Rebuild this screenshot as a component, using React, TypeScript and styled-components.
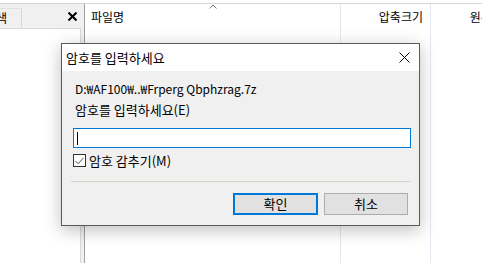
import React from "react";
import styled, { createGlobalStyle } from "styled-components";

const GlobalStyle = createGlobalStyle`
  html, body {
    margin: 0;
    padding: 0;
    background: #fff;
  }
  body {
    font-family: "Noto Sans CJK KR", "Noto Sans", sans-serif;
    font-size: 12px;
    color: #000;
  }
`;

const Screen = styled.div`
  position: relative;
  width: 482px;
  height: 263px;
  overflow: hidden;
  padding-top: 3px;
  box-sizing: border-box;
`;

const Frame = styled.div`
  display: flex;
  height: 100%;
  border-top: 1px solid #d7d7d7;
`;

/* left side pane */
const SidePane = styled.div`
  width: 84px;
  flex: none;
  display: flex;
  flex-direction: column;
  background: #f0f0f0;
  border-right: 1px solid #a0a0a0;
`;

const SideTabs = styled.div`
  height: 24px;
  display: flex;
  align-items: flex-end;
`;

const Tab = styled.div`
  width: 21px;
  height: 19px;
  overflow: hidden;
  border-right: 1px solid #d9d9d9;
  border-top: 1px solid #e2e2e2;
  line-height: 18px;
  white-space: nowrap;
  span {
    margin-left: -4px;
  }
`;

const PaneClose = styled.div`
  margin-left: auto;
  margin-right: 7px;
  align-self: center;
  display: flex;
`;

const SideList = styled.div`
  flex: 1;
  width: 80px;
  background: #fff;
  border-top: 1px solid #dadada;
  border-right: 1px solid #d9d9d9;
`;

/* right file list */
const ListPane = styled.div`
  flex: 1;
  display: flex;
  background: #fff;
`;

const Column = styled.div<{ $w: number; $align?: "left" | "right" }>`
  position: relative;
  width: ${(p) => p.$w}px;
  flex: none;
  border-right: 1px solid #e3e9f1;
  display: flex;
  flex-direction: column;
  align-items: ${(p) => (p.$align === "right" ? "flex-end" : "flex-start")};
`;

const HeaderCell = styled.div<{ $pad: number; $align?: "left" | "right" }>`
  height: 26px;
  line-height: 26px;
  white-space: nowrap;
  ${(p) => (p.$align === "right" ? `padding-right: ${p.$pad}px;` : `padding-left: ${p.$pad}px;`)}
`;

const SortArrow = styled.svg`
  position: absolute;
  top: 0;
  left: 50%;
  margin-left: -4px;
`;

/* dialog */
const Dialog = styled.div`
  position: absolute;
  left: 61px;
  top: 43px;
  width: 357px;
  height: 181px;
  border: 1px solid #5a5a5a;
  background: #f0f0f0;
  display: flex;
  flex-direction: column;
  box-shadow: 0 4px 16px rgba(0, 0, 0, 0.26);
  font-size: 13px;
`;

const TitleBar = styled.div`
  height: 27px;
  flex: none;
  background: #fff;
  display: flex;
  align-items: center;
  padding: 0 9px 0 4px;
`;

const Title = styled.div`
  flex: 1;
  line-height: 16px;
`;

const Body = styled.div`
  flex: 1;
  display: flex;
  flex-direction: column;
  padding-top: 10px;
`;

const TextLine = styled.div<{ $top?: number; $small?: boolean }>`
  margin: ${(p) => p.$top ?? 0}px 0 0 13px;
  line-height: 16px;
  white-space: nowrap;
  font-size: ${(p) => (p.$small ? 12 : 13)}px;
`;

const Field = styled.div`
  margin: 10px 8px 0 11px;
  height: 18px;
  border: 1px solid #0078d7;
  background: #fff;
  display: flex;
  align-items: center;
`;

const Caret = styled.div`
  width: 1px;
  height: 13px;
  margin-left: 3px;
  background: #000;
`;

const CheckRow = styled.div`
  margin: 6px 0 0 11px;
  display: flex;
  align-items: center;
  gap: 3px;
  height: 13px;
  line-height: 16px;
`;

const CheckBox = styled.div`
  width: 11px;
  height: 11px;
  border: 1px solid #333;
  background: #fff;
  display: flex;
  align-items: center;
  justify-content: center;
`;

const Separator = styled.div`
  margin: 14px 8px 0 9px;
  height: 1px;
  background: #d3d4c6;
`;

const ButtonRow = styled.div`
  margin-top: 11px;
  padding-right: 11px;
  display: flex;
  justify-content: flex-end;
  gap: 6px;
`;

const Button = styled.div<{ $primary?: boolean; $w: number }>`
  width: ${(p) => p.$w}px;
  height: 22px;
  box-sizing: border-box;
  background: #e1e1e1;
  border: ${(p) => (p.$primary ? "2px solid #0078d7" : "1px solid #adadad")};
  display: flex;
  align-items: center;
  justify-content: center;
  line-height: 16px;
`;

const CloseX = ({ size, bold }: { size: number; bold?: boolean }) => (
  <svg width={size} height={size} viewBox={`0 0 ${size} ${size}`}>
    <path
      d={`M0.5 0.5 L${size - 0.5} ${size - 0.5} M${size - 0.5} 0.5 L0.5 ${size - 0.5}`}
      stroke="#000"
      strokeWidth={bold ? 2 : 1}
      fill="none"
    />
  </svg>
);

export default function App() {
  return (
    <>
      <GlobalStyle />
      <Screen>
        <Frame>
          <SidePane>
            <SideTabs>
              <Tab>
                <span>색</span>
              </Tab>
              <PaneClose>
                <CloseX size={9} bold />
              </PaneClose>
            </SideTabs>
            <SideList />
          </SidePane>
          <ListPane>
            <Column $w={255}>
              <SortArrow width="8" height="5" viewBox="0 0 8 5">
                <path d="M0.5 4.5 L4 1 L7.5 4.5" stroke="#7a7a7a" fill="none" />
              </SortArrow>
              <HeaderCell $pad={6}>파일명</HeaderCell>
            </Column>
            <Column $w={89} $align="right">
              <HeaderCell $pad={7} $align="right">
                압축크기
              </HeaderCell>
            </Column>
            <Column $w={90} $align="right">
              <HeaderCell $pad={7} $align="right">
                원본크기
              </HeaderCell>
            </Column>
          </ListPane>
        </Frame>

        <Dialog>
          <TitleBar>
            <Title>암호를 입력하세요</Title>
            <CloseX size={11} />
          </TitleBar>
          <Body>
            <TextLine $small>D:₩AF100₩..₩Frperg Qbphzrag.7z</TextLine>
            <TextLine $top={5}>암호를 입력하세요(E)</TextLine>
            <Field>
              <Caret />
            </Field>
            <CheckRow>
              <CheckBox>
                <svg width="9" height="8" viewBox="0 0 9 8">
                  <path d="M0.5 4 L3.2 6.8 L8.5 0.8" stroke="#555" fill="none" />
                </svg>
              </CheckBox>
              <span>암호 감추기(M)</span>
            </CheckRow>
            <Separator />
            <ButtonRow>
              <Button $primary $w={85}>
                확인
              </Button>
              <Button $w={84}>취소</Button>
            </ButtonRow>
          </Body>
        </Dialog>
      </Screen>
    </>
  );
}
